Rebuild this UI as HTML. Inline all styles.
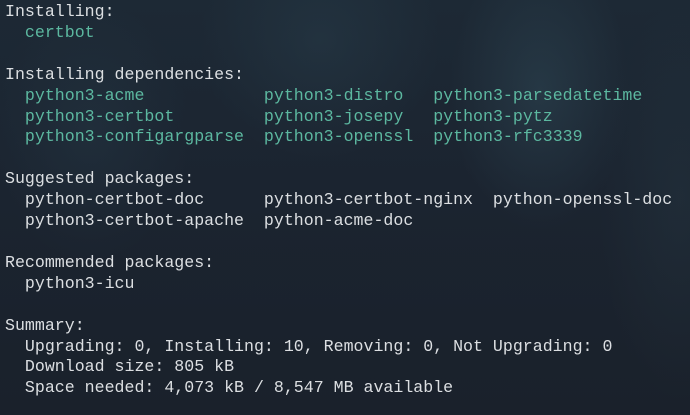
<!DOCTYPE html>
<html><head><meta charset="utf-8"><style>
html,body{margin:0;padding:0}
body{width:690px;height:415px;overflow:hidden;position:relative;
background:
radial-gradient(ellipse 90px 140px at 540px 90px,rgba(60,95,110,.3),transparent),
radial-gradient(ellipse 120px 120px at 320px 40px,rgba(50,80,95,.25),transparent),
radial-gradient(ellipse 100px 130px at 90px 130px,rgba(45,70,85,.25),transparent),
radial-gradient(ellipse 80px 200px at 680px 200px,rgba(50,75,85,.2),transparent),
linear-gradient(180deg,#1d2935 0%,#1b2430 45%,#1a212b 100%);}
pre{margin:0;position:absolute;left:5px;top:2px;font-family:"Liberation Mono",monospace;font-size:16.6px;line-height:20.9px;color:#dcdfe2;white-space:pre}
.g{color:#5cb8a0}
</style></head><body><pre>Installing:
  <span class="g">certbot</span>

Installing dependencies:
  <span class="g">python3-acme</span>            <span class="g">python3-distro</span>   <span class="g">python3-parsedatetime</span>
  <span class="g">python3-certbot</span>         <span class="g">python3-josepy</span>   <span class="g">python3-pytz</span>
  <span class="g">python3-configargparse</span>  <span class="g">python3-openssl</span>  <span class="g">python3-rfc3339</span>

Suggested packages:
  python-certbot-doc      python3-certbot-nginx  python-openssl-doc
  python3-certbot-apache  python-acme-doc

Recommended packages:
  python3-icu

Summary:
  Upgrading: 0, Installing: 10, Removing: 0, Not Upgrading: 0
  Download size: 805 kB
  Space needed: 4,073 kB / 8,547 MB available</pre></body></html>
